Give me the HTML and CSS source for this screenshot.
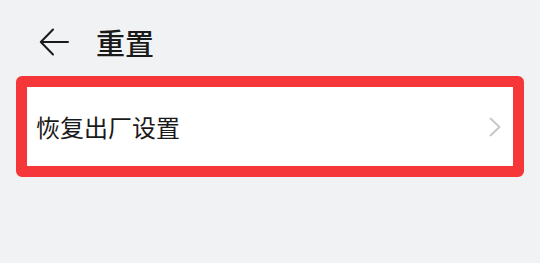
FILE: index.html
```html
<!DOCTYPE html>
<html lang="zh">
<head>
<meta charset="utf-8">
<link rel="stylesheet" href="styles.css">
</head>
<body>
<div class="page">
  <header class="header">
    <svg class="back" width="30" height="28" viewBox="0 0 30 28">
      <path d="M14 1.5 L1.8 14 L14 26.5 M1.8 14 H29" fill="none" stroke="#1a1a1a" stroke-width="2" stroke-linecap="round" stroke-linejoin="round"/>
    </svg>
    <h1 class="title">重置</h1>
  </header>
  <div class="card">
    <span class="label">恢复出厂设置</span>
    <svg class="chevron" width="12" height="20" viewBox="0 0 12 20">
      <path d="M1.5 1.5 L10.5 10 L1.5 18.5" fill="none" stroke="#c6c6c6" stroke-width="1.8" stroke-linecap="round" stroke-linejoin="round"/>
    </svg>
  </div>
</div>
</body>
</html>
```
FILE: styles.css
```css
html, body {
  margin: 0;
  padding: 0;
  background: #f1f2f4;
}
body {
  width: 540px;
  height: 263px;
  font-family: "Noto Sans CJK SC", "Noto Sans", sans-serif;
  color: #1a1a1a;
}
.header {
  display: flex;
  align-items: center;
  height: 76px;
  padding-left: 39px;
  padding-top: 8px;
  box-sizing: border-box;
}
.back {
  display: block;
  margin-right: 27px;
}
.title {
  margin: 0;
  font-size: 29px;
  font-weight: 500;
  line-height: 1;
  color: #1a1a1a;
}
.card {
  margin: 0 16px;
  height: 101px;
  box-sizing: border-box;
  border: 11px solid #f5373a;
  border-radius: 6px;
  background: #ffffff;
  display: flex;
  align-items: center;
  justify-content: space-between;
  padding: 0 12px 0 9px;
}
.label {
  font-size: 24px;
  line-height: 1;
  color: #1a1a1a;
}
.chevron {
  display: block;
}
```
